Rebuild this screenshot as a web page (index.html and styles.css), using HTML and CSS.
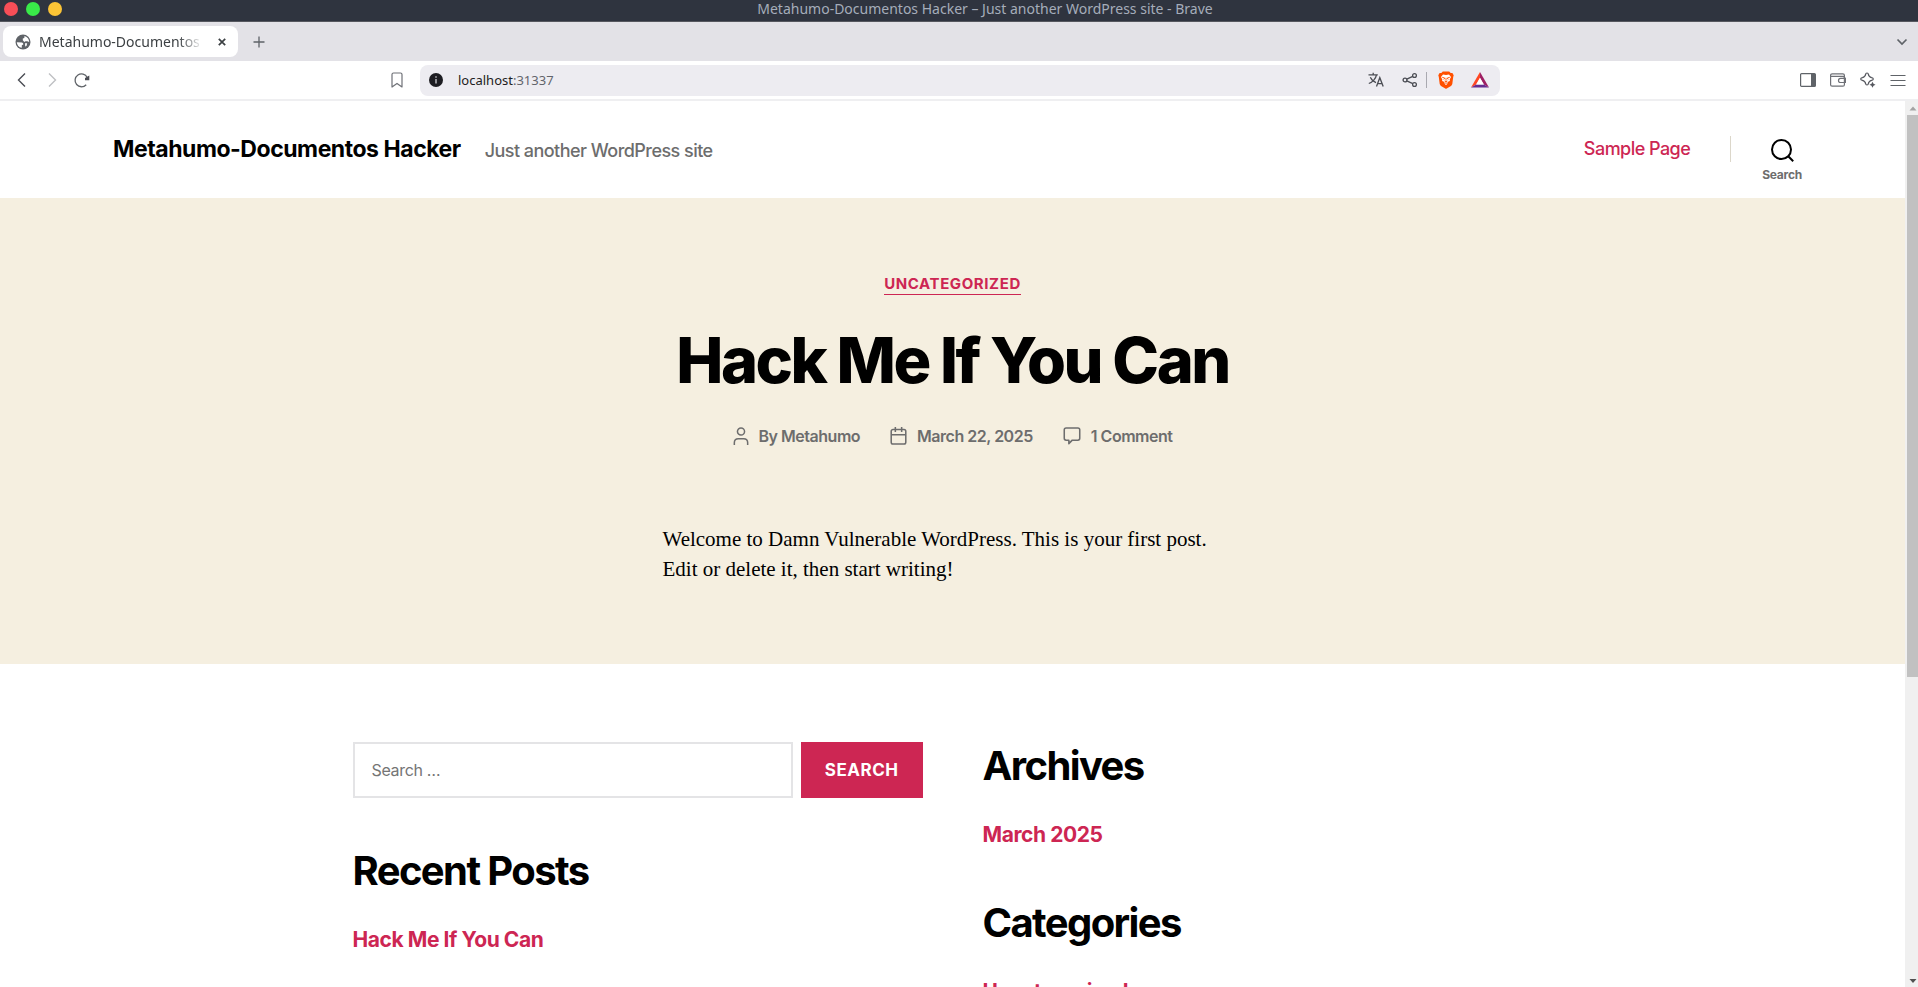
FILE: index.html
```html
<!DOCTYPE html>
<html lang="en">
<head>
<meta charset="utf-8">
<title>Metahumo-Documentos Hacker – Just another WordPress site</title>
<link rel="stylesheet" href="styles.css">
</head>
<body>
<div class="titlebar">
  <div class="window-buttons">
    <button class="dot dot-red" aria-label="Close window"></button>
    <button class="dot dot-green" aria-label="Maximize window"></button>
    <button class="dot dot-yellow" aria-label="Minimize window"></button>
  </div>
  <div class="window-title">Metahumo-Documentos Hacker – Just another WordPress site - Brave</div>
</div>

<div class="tabstrip">
  <div class="tab">
    <svg class="globe" viewBox="0 0 16 16"><circle cx="8" cy="8" r="7.500" fill="#5f6368"/><path d="M1.800 8.200 7 8.600Q8.500 9 8.300 10.500L6.800 11.200V13.800Q2.200 13 1.800 8.200zM9.500 2Q14 3.500 14.200 8L12.300 7.200H10.500L9.300 8 7.800 6.300V4.600L9.300 4z" fill="#fff"/><path d="M10 9.300h2.200L11.500 12l-1.300.6z" fill="#fff"/></svg>
    <span class="tab-title">Metahumo-Documentos</span>
    <button class="icon-button tab-close" aria-label="Close tab"><svg width="8" height="8" viewBox="0 0 8 8"><path d="M.8.8l6.400 6.400M7.200.8.8 7.200" stroke="#3c4043" stroke-width="1.700"/></svg></button>
  </div>
  <button class="icon-button new-tab" aria-label="New tab"><svg width="12" height="12" viewBox="0 0 12 12"><path d="M6 .5v11M.5 6h11" stroke="#5f6368" stroke-width="1.300"/></svg></button>
  <button class="icon-button tab-search" aria-label="Search tabs"><svg width="12" height="12" viewBox="0 0 12 12"><path d="M1.500 3.500 6 8l4.500-4.500" fill="none" stroke="#5f6368" stroke-width="1.700"/></svg></button>
</div>

<div class="toolbar">
  <div class="nav-buttons">
    <button class="icon-button" aria-label="Back"><svg width="16" height="16" viewBox="0 0 16 16"><path d="M11 1.500 4.500 8l6.500 6.500" fill="none" stroke="#4b4d54" stroke-width="1.400"/></svg></button>
    <button class="icon-button" aria-label="Forward"><svg width="16" height="16" viewBox="0 0 16 16"><path d="M5 1.500 11.500 8 5 14.500" fill="none" stroke="#bfc0c3" stroke-width="1.400"/></svg></button>
    <button class="icon-button" aria-label="Reload"><svg width="16" height="16" viewBox="0 0 16 16"><path d="M12.200 12.700A6.400 6.400 0 1 1 13.200 5.500" fill="none" stroke="#5f6368" stroke-width="1.300"/><path d="M15.300 3.500v4.700h-4.300V6z" fill="#4b4d54"/></svg></button>
  </div>
  <button class="icon-button bookmark" aria-label="Bookmark this tab"><svg width="14" height="16" viewBox="0 0 14 16"><path d="M2 2.500Q2 1 3.500 1h7Q12 1 12 2.500V15l-5-3.600L2 15z" fill="none" stroke="#6f7177" stroke-width="1.200" stroke-linejoin="round"/></svg></button>
  <div class="address">
    <svg width="14" height="14" viewBox="0 0 14 14"><circle cx="7" cy="7" r="7" fill="#1d1d22"/><path d="M7 6v4.500M7 3.200v1.500" stroke="#b8b8bd" stroke-width="1.500"/></svg>
    <div class="url" role="textbox" aria-label="Address">localhost<span class="port">:31337</span></div>
    <button class="icon-button" aria-label="Translate"><svg width="16" height="16" viewBox="0 0 16 16"><path d="M.5 2.800h9.300M5.200.8v2M2.300 5.300C4 8.500 6 10 8 10.700M8.500 2.800C7.800 6.500 4.500 10.300.8 11.500M8.500 14.500 11.800 5.700l3.400 8.800M9.700 11.700h4.300" fill="none" stroke="#4b4d54" stroke-width="1.300"/></svg></button>
    <button class="icon-button share" aria-label="Share"><svg width="16" height="16" viewBox="0 0 16 16"><g fill="none" stroke="#4b4d54" stroke-width="1.300"><circle cx="3" cy="8" r="1.900"/><circle cx="12.500" cy="3.500" r="1.900"/><circle cx="12.500" cy="12.500" r="1.900"/><path d="m4.800 7.200 6-2.900M4.800 8.800l6 2.900"/></g></svg></button>
    <span class="divider"></span>
    <button class="icon-button" aria-label="Brave Shields"><svg width="16" height="18" viewBox="0 0 16 18"><path d="M4.800.5h6.400l1.500 1.600 1.700-.2 1.300 2.400-.5 1.600-.9 7.200q-.3 1-1.300 1.800L8.700 17.500q-.7.400-1.400 0L3 14.900q-1-.8-1.300-1.800L.8 5.900.3 4.300l1.300-2.400 1.700.2z" fill="#ff5000"/><path d="m5 3.600 3 .5 3-.5 2 2.500-1.300 2.300.2 1.500L9.400 11l.4 1.500-1.800 1.600-1.800-1.600.4-1.500-2.500-1.100.2-1.500L3 6.100z" fill="#fff"/><path d="m4.200 6.300 2.500.7-.9 1.500M11.800 6.300 9.300 7l.9 1.500M8 6.800v3M6.600 10l1.400.8L9.400 10M6.400 12.600 8 11.800l1.600.8" fill="none" stroke="#ff5000" stroke-width=".9"/></svg></button>
    <button class="icon-button rewards" aria-label="Brave Rewards"><svg width="18" height="16" viewBox="0 0 18 16"><path d="M9 0 0 15.500l5.200-3L9 6z" fill="#ff4724"/><path d="m9 0 9 15.500-5.200-3L9 6z" fill="#9e1f63"/><path d="M0 15.500h18l-5.200-3H5.200z" fill="#662d91"/><path d="m9 5.800-3.900 6.800h7.800z" fill="#fff"/></svg></button>
  </div>
  <div class="tools">
    <button class="icon-button" aria-label="Sidebar"><svg width="16" height="14" viewBox="0 0 16 14"><rect x=".6" y=".6" width="14.800" height="12.800" rx="1" fill="none" stroke="#5f6368" stroke-width="1.200"/><path d="M11 1h4v12h-4z" fill="#5f6368"/></svg></button>
    <button class="icon-button" aria-label="Wallet"><svg width="16" height="14" viewBox="0 0 16 14"><g fill="none" stroke="#6f7177" stroke-width="1.200"><rect x=".6" y=".8" width="13.800" height="12.400" rx="1.500"/><path d="M1 3.300h12.500l1.500 1.500M15.500 5.300h-5q-2 0-2 2.100t2 2.100h5z"/></g></svg></button>
    <button class="icon-button" aria-label="Leo AI"><svg width="16" height="16" viewBox="0 0 16 16"><path d="M7 1q1.300 0 1.300 1.200.5 2.800 3.300 3.500Q13.300 6 13.300 7t-1.700 1.300Q8.800 9 8.300 11.800 8.300 13 7 13t-1.300-1.200Q5.200 9 2.400 8.300.7 8 .7 7t1.700-1.300Q5.200 5 5.700 2.200 5.700 1 7 1z" fill="none" stroke="#55575e" stroke-width="1.200"/><path d="m12.500 9.700 1 2 2 1-2 1-1 2-1-2-2-1 2-1z" fill="#55575e"/></svg></button>
    <button class="icon-button" aria-label="Menu"><svg width="16" height="14" viewBox="0 0 16 14"><path d="M.5 2.500h15M.5 7.500h15M.5 12.500h15" stroke="#5f6368" stroke-width="1.200"/></svg></button>
  </div>
</div>

<div class="viewport">
  <div class="page">
    <header class="site-header">
      <a class="site-title" href="#">Metahumo-Documentos Hacker</a>
      <div class="tagline">Just another WordPress site</div>
      <nav class="site-nav"><a href="#">Sample Page</a></nav>
      <button class="search-toggle"><svg width="23" height="23" viewBox="0 0 23 23"><circle cx="10.500" cy="10.500" r="9.500" fill="none" stroke="#000" stroke-width="2"/><path d="m17 17 5.200 5.200" stroke="#000" stroke-width="2"/></svg><span>Search</span></button>
    </header>

    <main class="post">
      <a class="category" href="#">Uncategorized</a>
      <h1 class="post-title">Hack Me If You Can</h1>
      <ul class="meta">
        <li><svg width="16" height="18" viewBox="0 0 18 20"><g fill="none" stroke="#6d6d6d" stroke-width="1.700"><circle cx="9" cy="5" r="4"/><path d="M1.500 20v-2.500Q1.500 13 6 13h6q4.500 0 4.500 4.500V20"/></g></svg><a href="#">By Metahumo</a></li>
        <li><svg width="17" height="18" viewBox="0 0 18 20"><g fill="none" stroke="#6d6d6d" stroke-width="1.700"><rect x=".9" y="2.800" width="16.200" height="16.200" rx="2"/><path d="M1 8.500h16M5.500 0v5.500M12.500 0v5.500"/></g></svg><a href="#">March 22, 2025</a></li>
        <li><svg width="18" height="18" viewBox="0 0 19 20"><path d="M3 1h13q2.100 0 2.100 2.100v9.400q0 2.100-2.100 2.100H9.800L6 18.500v-3.900H3Q.9 14.600.9 12.500V3.100Q.9 1 3 1z" fill="none" stroke="#6d6d6d" stroke-width="1.700" stroke-linejoin="round"/></svg><a href="#">1 Comment</a></li>
      </ul>
      <p class="post-body">Welcome to Damn Vulnerable WordPress. This is your first post. Edit or delete it, then start writing!</p>
    </main>

    <aside class="widgets">
      <div class="column">
        <form class="search-form">
          <input class="search-field" type="search" placeholder="Search …" aria-label="Search for">
          <button class="search-submit" type="button">Search</button>
        </form>
        <section class="widget"><h2>Recent Posts</h2><a href="#">Hack Me If You Can</a></section>
      </div>
      <div class="column">
        <section class="widget"><h2>Archives</h2><a href="#">March 2025</a></section>
        <section class="widget"><h2>Categories</h2><a href="#">Uncategorized</a></section>
      </div>
    </aside>
  </div>
  <div class="scrollbar">
    <svg width="8" height="14" viewBox="0 0 8 14"><path d="M.5 9.500 4 5.500l3.500 4z" fill="#a3a3a3"/></svg>
    <div class="track"><div class="thumb"></div></div>
    <svg width="8" height="14" viewBox="0 0 8 14"><path d="M.5 6 4 10l3.500-4z" fill="#505050"/></svg>
  </div>
</div>
</body>
</html>
```
FILE: styles.css
```css
* { box-sizing: border-box; }

body {
  margin: 0;
  height: 100vh;
  display: flex;
  flex-direction: column;
  overflow: hidden;
  background: #fff;
  font-family: Inter, "Liberation Sans", sans-serif;
}

button { border: 0; padding: 0; background: none; font: inherit; }
a { text-decoration: none; color: #cd2653; }
svg { display: block; flex: none; }

.icon-button { display: flex; align-items: center; justify-content: center; }

/* Window frame */
.titlebar {
  flex: none;
  display: grid;
  grid-template-columns: 1fr auto 1fr;
  height: 22px;
  padding: 0 0 4px 4px;
  align-items: center;
  background: #2f343f;
  border-bottom: 1px solid #56585f;
  font: 14px/18px "Noto Sans", sans-serif;
  color: #a5adba;
}
.window-buttons { display: flex; gap: 8px; }
.dot { width: 14px; height: 14px; border-radius: 50%; }
.dot-red { background: #f74e57; }
.dot-green { background: #39ea49; }
.dot-yellow { background: #fbc436; }
.window-title { padding-left: 48px; white-space: nowrap; }

/* Tabs */
.tabstrip {
  flex: none;
  display: flex;
  align-items: center;
  height: 39px;
  padding: 0 10px 0 3px;
  background: #e3e2e7;
}
.tab {
  display: flex;
  align-items: center;
  width: 235px;
  height: 31px;
  padding: 0 12px;
  border-radius: 8px;
  background: #fff;
  font: 14px/20px "Noto Sans", sans-serif;
  color: #3c4043;
}
.globe { width: 16px; height: 16px; margin-right: 8px; }
.tab-title {
  flex: 1;
  white-space: nowrap;
  margin-right: 15px;
  mask-image: linear-gradient(to right, #000 85%, transparent);
}
.new-tab { margin-left: 15px; }
.tab-search { margin-left: auto; }

/* Toolbar */
.toolbar {
  flex: none;
  display: grid;
  grid-template-columns: 388px 32px minmax(0, 1080px) 1fr;
  align-items: center;
  height: 40px;
  border-bottom: 2px solid #efeff1;
}
.nav-buttons { display: flex; gap: 14px; padding-left: 14px; }
.bookmark { justify-content: flex-start; padding-left: 2px; }
.address {
  display: flex;
  align-items: center;
  height: 31px;
  padding: 0 11px 0 9px;
  border-radius: 8px;
  background: #edecf1;
  font: 13px/20px "Noto Sans", sans-serif;
}
.url { flex: 1; margin-left: 15px; color: #1d1d22; }
.port { color: #62646b; }
.share { margin-left: 18px; }
.divider { width: 1px; height: 16px; margin: 0 11px 0 8px; background: #a9a9b0; }
.rewards { margin-left: 17px; }
.tools { display: flex; justify-content: flex-end; gap: 14px; padding-right: 12px; }

/* Viewport */
.viewport { flex: 1; min-height: 0; display: flex; }
.page { flex: 1; min-width: 0; overflow: hidden; }

.site-header {
  display: flex;
  align-items: center;
  height: 97px;
  padding: 0 103px 2px 113px;
}
.site-title { font-size: 23px; line-height: 30px; font-weight: 700; color: #000; letter-spacing: -0.02em; }
.tagline { margin: 4px 0 0 24px; font-size: 18px; line-height: 24px; font-weight: 500; color: #6d6d6d; letter-spacing: -0.03em; }
.site-nav {
  margin-left: auto;
  padding-right: 40px;
  border-right: 1px solid #dcd7ca;
  font-size: 18px;
  line-height: 26px;
  font-weight: 500;
  letter-spacing: -0.03em;
}
.search-toggle {
  display: flex;
  flex-direction: column;
  align-items: center;
  gap: 6px;
  margin: 24px 0 0 31px;
  font-size: 12px;
  line-height: 14px;
  font-weight: 700;
  letter-spacing: -0.02em;
  color: #6d6d6d;
}

.post {
  display: flex;
  flex-direction: column;
  align-items: center;
  padding: 76px 20px 80px;
  background: #f5efe0;
}
.category {
  border-bottom: 1px solid #cd2653;
  font-size: 15px;
  line-height: 20px;
  font-weight: 700;
  letter-spacing: 0.04em;
  text-transform: uppercase;
}
.post-title { margin: 27px 0 0; font-size: 63px; line-height: 76px; font-weight: 800; letter-spacing: -0.04em; }
.meta {
  display: flex;
  gap: 30px;
  margin: 26px 0 0;
  padding: 0;
  list-style: none;
  font-size: 16px;
  line-height: 24px;
  font-weight: 600;
  letter-spacing: -0.03em;
}
.meta li { display: flex; align-items: center; gap: 10px; }
.meta a { color: #6d6d6d; }
.post-body {
  width: 100%;
  max-width: 580px;
  margin: 76px 0 0;
  font: 21px/30px "Liberation Serif", serif;
  color: #000;
}

.widgets {
  display: grid;
  grid-template-columns: 1fr 1fr;
  gap: 60px;
  max-width: 1200px;
  margin: 0 auto;
  padding-top: 78px;
}
.column { display: flex; flex-direction: column; gap: 49px; }
.search-form { display: flex; gap: 8px; }
.search-field {
  flex: 1;
  min-width: 0;
  height: 56px;
  padding: 0 17px;
  border: 2px solid #e4e4e6;
  border-radius: 0;
  font: 16px/24px Inter, sans-serif;
  letter-spacing: -0.02em;
}
.search-field::placeholder { color: #757575; }
.search-submit {
  padding: 0 24px;
  background: #cd2653;
  color: #fff;
  font-size: 17px;
  font-weight: 700;
  letter-spacing: 0.03em;
  text-transform: uppercase;
}
.widget h2 { margin: 0 0 29px; font-size: 40px; line-height: 48px; font-weight: 700; letter-spacing: -0.04em; }
.widget a { display: block; font-size: 21px; line-height: 31px; font-weight: 700; letter-spacing: -0.02em; }

.scrollbar {
  display: flex;
  flex-direction: column;
  align-items: center;
  width: 13px;
  padding-left: 2px;
  background: #f0f0f0;
}
.track { flex: 1; width: 100%; }
.thumb { height: 65.5%; background: #c1c1c1; }
```
